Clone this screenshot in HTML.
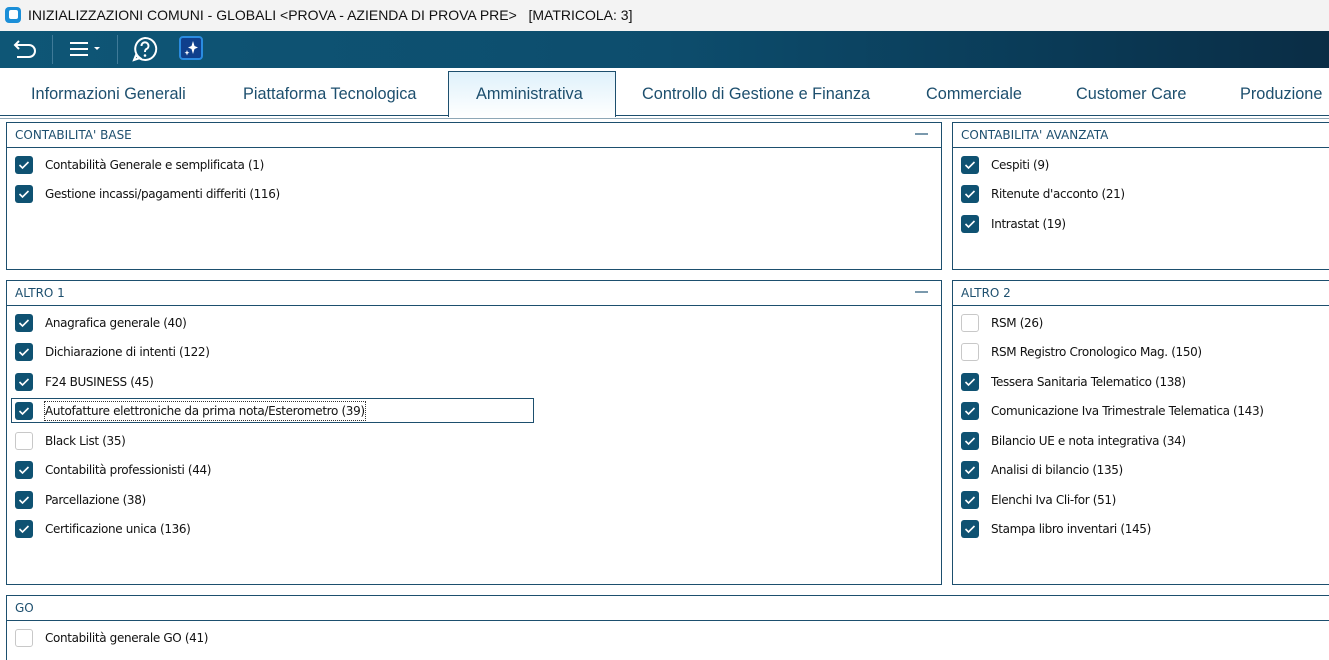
<!DOCTYPE html><html><head><meta charset="utf-8"><style>
*{margin:0;padding:0;box-sizing:border-box}
html,body{width:1329px;height:660px;overflow:hidden}
body{background:#fff;font-family:Tahoma,"DejaVu Sans","Liberation Sans",sans-serif;position:relative}
.a{position:absolute}
#title{left:0;top:0;width:1329px;height:31px;background:#f3f3f3;font:14px "Liberation Sans",sans-serif;color:#111;line-height:31px;padding-left:28px;white-space:pre}
#tb{left:0;top:31px;width:1329px;height:37px;background:linear-gradient(90deg,#0e5676 0%,#0d4d6d 50%,#0a3a56 80%,#0a2d45 100%)}
.tab{position:absolute;top:85px;font:16.3px "Liberation Sans",sans-serif;color:#1d4f6e;white-space:nowrap}
.panel{position:absolute;border:1px solid #1d4f6e;background:#fff}
.ph{height:25px;border-bottom:1px solid #1d4f6e;font:12px "DejaVu Sans",sans-serif;color:#1d4f6e;line-height:25px;padding-left:8px;position:relative}
.ph .m{position:absolute;right:13px;top:10px;width:13px;height:2px;background:#7a99ad}
.it{position:absolute;left:8px;height:18px;font:12px "DejaVu Sans",sans-serif;color:#111;line-height:18px;white-space:nowrap}
.cb{position:absolute;left:0;top:0;width:18px;height:18px;border-radius:3px;background:#0f5272}
.cb.u{background:#fff;border:1px solid #c8c8c8}
.cb svg{position:absolute;left:3px;top:4px}
.it span{position:absolute;left:30px;top:0;letter-spacing:-0.35px}
</style></head><body>
<div class="a" id="title">INIZIALIZZAZIONI COMUNI - GLOBALI &lt;PROVA - AZIENDA DI PROVA PRE&gt;   [MATRICOLA: 3]</div>
<div class="a" style="left:5px;top:7px;width:16px;height:16px;border-radius:4px;background:#1b8fd8"><div style="position:absolute;left:4px;top:3px;width:9px;height:9px;background:#fff;border-radius:2px"></div></div>
<div class="a" id="tb">
<svg class="a" style="left:12px;top:6px" width="26" height="24" viewBox="0 0 26 24"><path d="M7 4 L3 8 L7 12 M3 8 H17 A6 6 0 0 1 17 20 H5" fill="none" stroke="#fff" stroke-width="2"/></svg>
<div class="a" style="left:52px;top:4px;width:1px;height:29px;background:#3f7a98"></div>
<svg class="a" style="left:68px;top:8px" width="36" height="20"><path d="M2 4H20M2 10H20M2 16H20" stroke="#fff" stroke-width="2"/><path d="M26 8l3 3 3-3z" fill="#fff"/></svg>
<div class="a" style="left:117px;top:4px;width:1px;height:29px;background:#3f7a98"></div>
<svg class="a" style="left:132px;top:5px" width="26" height="26"><path d="M13 2a11 11 0 1 1-9 17l-2 5 6-2A11 11 0 0 1 13 2z" fill="none" stroke="#fff" stroke-width="2"/><path d="M9.5 10a3.5 3.5 0 1 1 5 3c-1.3.7-1.5 1.3-1.5 3" fill="none" stroke="#fff" stroke-width="2"/><circle cx="13" cy="19.5" r="1.3" fill="#fff"/></svg>
<div class="a" style="left:179px;top:5px;width:24px;height:24px;border-radius:4px;background:#0f3f8c;border:2px solid #2a8be0"></div>
<svg class="a" style="left:183px;top:9px" width="16" height="16"><path d="M10 1 L11.5 6 L15 7.5 L11.5 9 L10 14 L8.5 9 L5 7.5 L8.5 6Z" fill="#fff"/><path d="M4 10 L4.7 12 L6.5 12.7 L4.7 13.4 L4 15.5 L3.3 13.4 L1.5 12.7 L3.3 12Z" fill="#fff"/></svg>
</div>
<div class="a" style="left:0;top:115px;width:1329px;height:1px;background:#1d4f6e"></div>
<div class="a" style="left:448px;top:71px;width:168px;height:46px;border:1px solid #1d4f6e;border-bottom:none;background:linear-gradient(#dff1fb,#fff)"></div>
<div class="tab" style="left:31px">Informazioni Generali</div>
<div class="tab" style="left:243px">Piattaforma Tecnologica</div>
<div class="tab" style="left:476px">Amministrativa</div>
<div class="tab" style="left:642px">Controllo di Gestione e Finanza</div>
<div class="tab" style="left:926px">Commerciale</div>
<div class="tab" style="left:1076px">Customer Care</div>
<div class="tab" style="left:1240px">Produzione</div>
<div class="a" style="left:0;top:118px;width:1329px;height:1px;background:#1d4f6e;opacity:.5"></div>

<div class="panel" style="left:6px;top:122px;width:936px;height:148px"><div class="ph">CONTABILITA' BASE<div class="m"></div></div>
<div class="it" style="top:33px"><div class="cb"><svg width="12" height="10"><path d="M1.5 5l3 3 6-6" fill="none" stroke="#fff" stroke-width="1.6"/></svg></div><span>Contabilità Generale e semplificata (1)</span></div>
<div class="it" style="top:62px"><div class="cb"><svg width="12" height="10"><path d="M1.5 5l3 3 6-6" fill="none" stroke="#fff" stroke-width="1.6"/></svg></div><span>Gestione incassi/pagamenti differiti (116)</span></div>
</div>
<div class="panel" style="left:952px;top:122px;width:390px;height:148px"><div class="ph">CONTABILITA' AVANZATA</div>
<div class="it" style="top:33px"><div class="cb"><svg width="12" height="10"><path d="M1.5 5l3 3 6-6" fill="none" stroke="#fff" stroke-width="1.6"/></svg></div><span>Cespiti (9)</span></div>
<div class="it" style="top:62px"><div class="cb"><svg width="12" height="10"><path d="M1.5 5l3 3 6-6" fill="none" stroke="#fff" stroke-width="1.6"/></svg></div><span>Ritenute d'acconto (21)</span></div>
<div class="it" style="top:92px"><div class="cb"><svg width="12" height="10"><path d="M1.5 5l3 3 6-6" fill="none" stroke="#fff" stroke-width="1.6"/></svg></div><span>Intrastat (19)</span></div>
</div>

<div class="panel" style="left:6px;top:280px;width:936px;height:305px"><div class="ph">ALTRO 1<div class="m"></div></div>
<div class="it" style="top:33px"><div class="cb"><svg width="12" height="10"><path d="M1.5 5l3 3 6-6" fill="none" stroke="#fff" stroke-width="1.6"/></svg></div><span>Anagrafica generale (40)</span></div>
<div class="it" style="top:62px"><div class="cb"><svg width="12" height="10"><path d="M1.5 5l3 3 6-6" fill="none" stroke="#fff" stroke-width="1.6"/></svg></div><span>Dichiarazione di intenti (122)</span></div>
<div class="it" style="top:92px"><div class="cb"><svg width="12" height="10"><path d="M1.5 5l3 3 6-6" fill="none" stroke="#fff" stroke-width="1.6"/></svg></div><span>F24 BUSINESS (45)</span></div>
<div class="a" style="left:4px;top:117px;width:523px;height:25px;border:1px solid #1d4f6e"></div>
<div class="it" style="top:121px"><div class="cb"><svg width="12" height="10"><path d="M1.5 5l3 3 6-6" fill="none" stroke="#fff" stroke-width="1.6"/></svg></div><span style="outline:1px dotted #333">Autofatture elettroniche da prima nota/Esterometro (39)</span></div>
<div class="it" style="top:151px"><div class="cb u"></div><span>Black List (35)</span></div>
<div class="it" style="top:180px"><div class="cb"><svg width="12" height="10"><path d="M1.5 5l3 3 6-6" fill="none" stroke="#fff" stroke-width="1.6"/></svg></div><span>Contabilità professionisti (44)</span></div>
<div class="it" style="top:210px"><div class="cb"><svg width="12" height="10"><path d="M1.5 5l3 3 6-6" fill="none" stroke="#fff" stroke-width="1.6"/></svg></div><span>Parcellazione (38)</span></div>
<div class="it" style="top:239px"><div class="cb"><svg width="12" height="10"><path d="M1.5 5l3 3 6-6" fill="none" stroke="#fff" stroke-width="1.6"/></svg></div><span>Certificazione unica (136)</span></div>
</div>
<div class="panel" style="left:952px;top:280px;width:390px;height:305px"><div class="ph">ALTRO 2</div>
<div class="it" style="top:33px"><div class="cb u"></div><span>RSM (26)</span></div>
<div class="it" style="top:62px"><div class="cb u"></div><span>RSM Registro Cronologico Mag. (150)</span></div>
<div class="it" style="top:92px"><div class="cb"><svg width="12" height="10"><path d="M1.5 5l3 3 6-6" fill="none" stroke="#fff" stroke-width="1.6"/></svg></div><span>Tessera Sanitaria Telematico (138)</span></div>
<div class="it" style="top:121px"><div class="cb"><svg width="12" height="10"><path d="M1.5 5l3 3 6-6" fill="none" stroke="#fff" stroke-width="1.6"/></svg></div><span>Comunicazione Iva Trimestrale Telematica (143)</span></div>
<div class="it" style="top:151px"><div class="cb"><svg width="12" height="10"><path d="M1.5 5l3 3 6-6" fill="none" stroke="#fff" stroke-width="1.6"/></svg></div><span>Bilancio UE e nota integrativa (34)</span></div>
<div class="it" style="top:180px"><div class="cb"><svg width="12" height="10"><path d="M1.5 5l3 3 6-6" fill="none" stroke="#fff" stroke-width="1.6"/></svg></div><span>Analisi di bilancio (135)</span></div>
<div class="it" style="top:210px"><div class="cb"><svg width="12" height="10"><path d="M1.5 5l3 3 6-6" fill="none" stroke="#fff" stroke-width="1.6"/></svg></div><span>Elenchi Iva Cli-for (51)</span></div>
<div class="it" style="top:239px"><div class="cb"><svg width="12" height="10"><path d="M1.5 5l3 3 6-6" fill="none" stroke="#fff" stroke-width="1.6"/></svg></div><span>Stampa libro inventari (145)</span></div>
</div>

<div class="panel" style="left:6px;top:595px;width:1340px;height:80px"><div class="ph">GO</div>
<div class="it" style="top:33px"><div class="cb u"></div><span>Contabilità generale GO (41)</span></div>
</div>
</body></html>
